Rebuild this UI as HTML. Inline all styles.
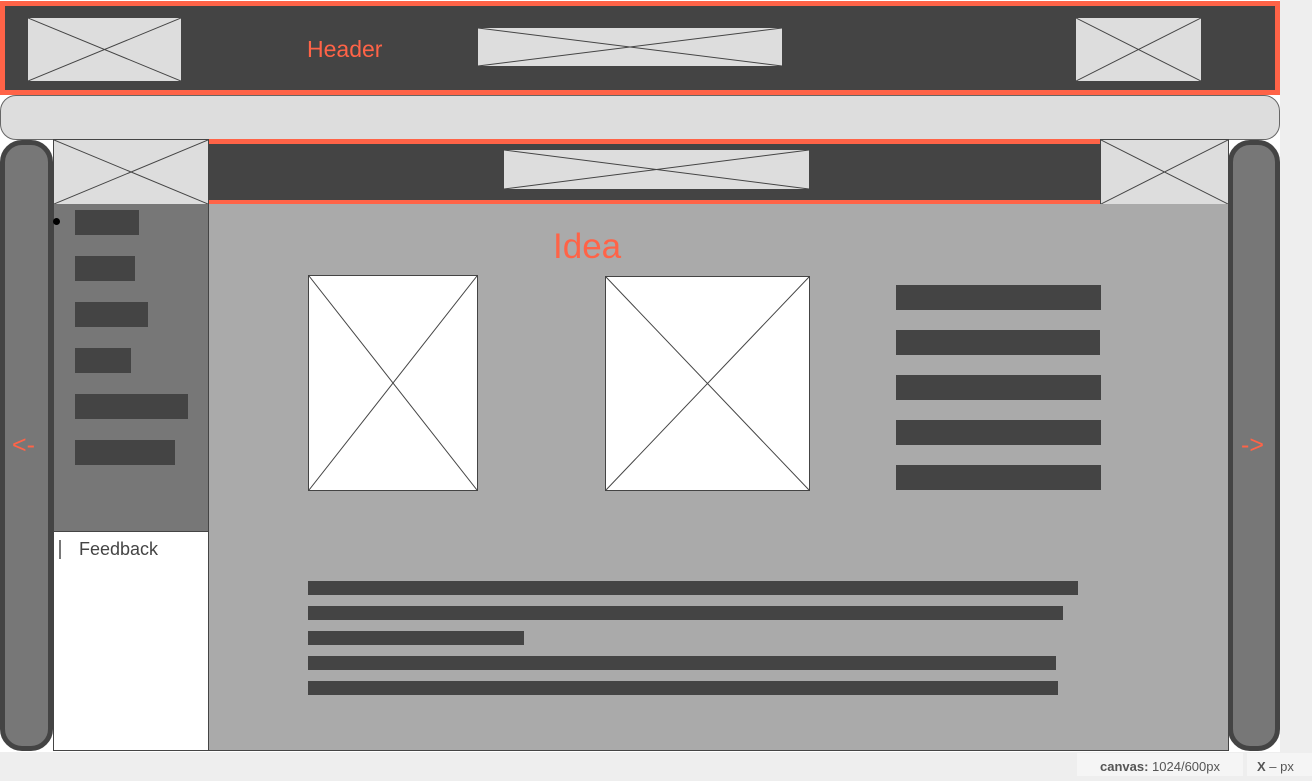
<!DOCTYPE html>
<html><head><style>
*{margin:0;padding:0;box-sizing:border-box}
body{width:1312px;height:776px;background:#eeeeee;position:relative;overflow:hidden;font-family:"Liberation Sans",sans-serif}
.a{position:absolute}
.ph{position:absolute;background:#dddddd;border:1px solid #444}
.ph svg,.wh svg{position:absolute;left:0;top:0;width:100%;height:100%}
.wh{position:absolute;background:#fff;border:1px solid #444}
.bar{position:absolute;background:#444}
</style></head><body>
<div class="a" style="left:0;top:0;width:1280px;height:752px;background:#fff"></div>
<div class="a" style="left:0;top:1px;width:1280px;height:94px;background:#444;border:5px solid #ff6347"></div>
<div class="ph" style="left:27px;top:17px;width:155px;height:65px"><svg viewBox="0 0 100 100" preserveAspectRatio="none"><line x1="0" y1="0" x2="100" y2="100" stroke="#444" vector-effect="non-scaling-stroke"/><line x1="100" y1="0" x2="0" y2="100" stroke="#444" vector-effect="non-scaling-stroke"/></svg></div>
<div class="a" style="left:307px;top:36px;font-size:23px;color:#ff6347">Header</div>
<div class="ph" style="left:477px;top:27px;width:306px;height:40px"><svg viewBox="0 0 100 100" preserveAspectRatio="none"><line x1="0" y1="0" x2="100" y2="100" stroke="#444" vector-effect="non-scaling-stroke"/><line x1="100" y1="0" x2="0" y2="100" stroke="#444" vector-effect="non-scaling-stroke"/></svg></div>
<div class="ph" style="left:1075px;top:17px;width:127px;height:65px"><svg viewBox="0 0 100 100" preserveAspectRatio="none"><line x1="0" y1="0" x2="100" y2="100" stroke="#444" vector-effect="non-scaling-stroke"/><line x1="100" y1="0" x2="0" y2="100" stroke="#444" vector-effect="non-scaling-stroke"/></svg></div>
<div class="a" style="left:0;top:95px;width:1280px;height:45px;background:#ddd;border:1px solid #666;border-radius:16px"></div>
<div class="a" style="left:0;top:140px;width:53px;height:611px;background:#777;border:5px solid #444;border-radius:22px"></div>
<div class="a" style="left:1228px;top:140px;width:52px;height:611px;background:#777;border:5px solid #444;border-radius:22px"></div>
<div class="a" style="left:12px;top:431px;font-size:25px;color:#ff6347">&lt;-</div>
<div class="a" style="left:1241px;top:431px;font-size:25px;color:#ff6347">-&gt;</div>
<div class="a" style="left:208px;top:139px;width:893px;height:66px;background:#444;border-top:5px solid #ff6347;border-bottom:5px solid #ff6347"></div>
<div class="ph" style="left:53px;top:139px;width:156px;height:66px"><svg viewBox="0 0 100 100" preserveAspectRatio="none"><line x1="0" y1="0" x2="100" y2="100" stroke="#444" vector-effect="non-scaling-stroke"/><line x1="100" y1="0" x2="0" y2="100" stroke="#444" vector-effect="non-scaling-stroke"/></svg></div>
<div class="ph" style="left:503px;top:149px;width:307px;height:41px"><svg viewBox="0 0 100 100" preserveAspectRatio="none"><line x1="0" y1="0" x2="100" y2="100" stroke="#444" vector-effect="non-scaling-stroke"/><line x1="100" y1="0" x2="0" y2="100" stroke="#444" vector-effect="non-scaling-stroke"/></svg></div>
<div class="ph" style="left:1100px;top:139px;width:129px;height:66px"><svg viewBox="0 0 100 100" preserveAspectRatio="none"><line x1="0" y1="0" x2="100" y2="100" stroke="#444" vector-effect="non-scaling-stroke"/><line x1="100" y1="0" x2="0" y2="100" stroke="#444" vector-effect="non-scaling-stroke"/></svg></div>
<div class="a" style="left:53px;top:204px;width:156px;height:328px;background:#777;border:1px solid #444;border-top:none"></div>
<div class="a" style="left:53px;top:218px;width:7px;height:7px;border-radius:50%;background:#000"></div>
<div class="bar" style="left:75px;top:210px;width:64px;height:25px"></div>
<div class="bar" style="left:75px;top:256px;width:60px;height:25px"></div>
<div class="bar" style="left:75px;top:302px;width:73px;height:25px"></div>
<div class="bar" style="left:75px;top:348px;width:56px;height:25px"></div>
<div class="bar" style="left:75px;top:394px;width:113px;height:25px"></div>
<div class="bar" style="left:75px;top:440px;width:100px;height:25px"></div>
<div class="a" style="left:53px;top:531px;width:156px;height:220px;background:#fff;border:1px solid #444"></div>
<div class="a" style="left:59px;top:540px;width:2px;height:19px;background:#777"></div>
<div class="a" style="left:79px;top:539px;font-size:18px;color:#444">Feedback</div>
<div class="a" style="left:208px;top:204px;width:1021px;height:547px;background:#aaa;border:1px solid #444;border-top:none"></div>
<div class="a" style="left:553px;top:227px;font-size:35px;color:#ff6347">Idea</div>
<div class="wh" style="left:308px;top:275px;width:170px;height:216px"><svg viewBox="0 0 100 100" preserveAspectRatio="none"><line x1="0" y1="0" x2="100" y2="100" stroke="#444" vector-effect="non-scaling-stroke"/><line x1="100" y1="0" x2="0" y2="100" stroke="#444" vector-effect="non-scaling-stroke"/></svg></div>
<div class="wh" style="left:605px;top:276px;width:205px;height:215px"><svg viewBox="0 0 100 100" preserveAspectRatio="none"><line x1="0" y1="0" x2="100" y2="100" stroke="#444" vector-effect="non-scaling-stroke"/><line x1="100" y1="0" x2="0" y2="100" stroke="#444" vector-effect="non-scaling-stroke"/></svg></div>
<div class="bar" style="left:896px;top:285px;width:205px;height:25px"></div>
<div class="bar" style="left:896px;top:330px;width:204px;height:25px"></div>
<div class="bar" style="left:896px;top:375px;width:205px;height:25px"></div>
<div class="bar" style="left:896px;top:420px;width:205px;height:25px"></div>
<div class="bar" style="left:896px;top:465px;width:205px;height:25px"></div>
<div class="bar" style="left:308px;top:581px;width:770px;height:14px"></div>
<div class="bar" style="left:308px;top:606px;width:755px;height:14px"></div>
<div class="bar" style="left:308px;top:631px;width:216px;height:14px"></div>
<div class="bar" style="left:308px;top:656px;width:748px;height:14px"></div>
<div class="bar" style="left:308px;top:681px;width:750px;height:14px"></div>
<div class="a" style="left:1077px;top:753px;width:166px;height:23px;background:#f5f5f5;font-size:13px;color:#555;line-height:28px;text-align:center"><b style="color:#555">canvas:</b> 1024/600px</div>
<div class="a" style="left:1247px;top:753px;width:65px;height:23px;background:#f5f5f5;font-size:13px;color:#555;line-height:28px;padding-left:10px"><b>X</b> – px</div>
</body></html>
